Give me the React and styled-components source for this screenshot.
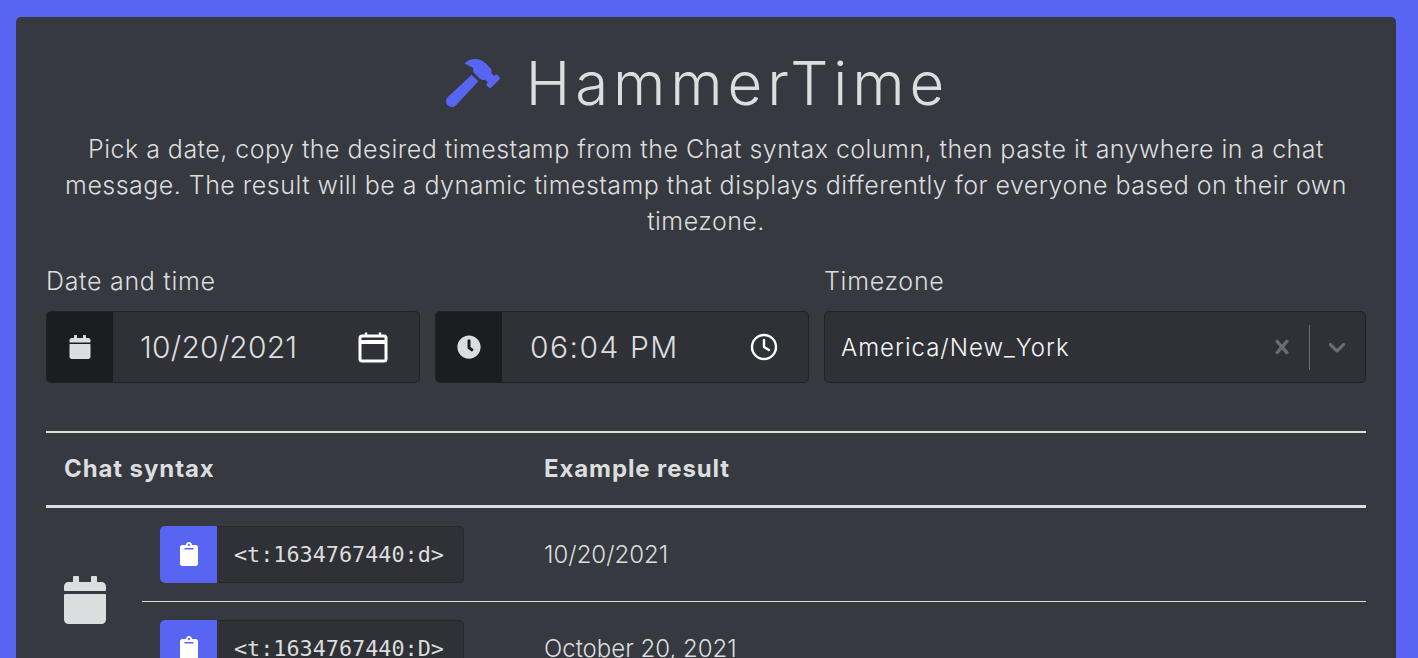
import styled, { createGlobalStyle } from "styled-components";
import { FaCalendar, FaClipboard, FaClock, FaHammer } from "react-icons/fa";

const GlobalStyle = createGlobalStyle`
  html, body {
    margin: 0;
    height: 100%;
    overflow: hidden;
    background: #5865f2;
  }
  body {
    font-family: "Inter", "Open Sans", sans-serif;
    color: #dcddde;
  }
`;

const Page = styled.div`
  padding: 17px 22px 0 16px;
`;

const Card = styled.main`
  background: #36393f;
  border-radius: 5px;
  padding: 30px;
  box-sizing: border-box;
`;

const Heading = styled.h1`
  margin: 0 0 12px;
  padding-right: 17px;
  display: flex;
  justify-content: center;
  align-items: center;
  gap: 26px;
  font-size: 60px;
  line-height: 72px;
  font-weight: 300;
  letter-spacing: 4.9px;

  svg {
    color: #5865f2;
    font-size: 54px;
  }
`;

const Lead = styled.p`
  margin: 0 0 24px;
  font-size: 25px;
  line-height: 36px;
  font-weight: 300;
  text-align: center;
  letter-spacing: 0.47px;
`;

const Fields = styled.div`
  display: grid;
  grid-template-columns: 763px 542px;
  gap: 15px;
`;

const FieldGroup = styled.div`
  display: flex;
  flex-direction: column;
`;

const Label = styled.label`
  font-size: 25px;
  line-height: 36px;
  font-weight: 300;
  margin-bottom: 12px;
  letter-spacing: 0.7px;
`;

const InputRow = styled.div`
  display: grid;
  grid-template-columns: 1fr 1fr;
  gap: 15px;
`;

const InputGroup = styled.div`
  display: flex;
  height: 72px;
  box-sizing: border-box;
  background: #2f3136;
  border: 1px solid #202225;
  border-radius: 5px;
  overflow: hidden;
`;

const Addon = styled.div`
  width: 67px;
  margin-left: -1px;
  flex: none;
  background: #1c1d20;
  display: flex;
  align-items: center;
  justify-content: center;
  font-size: 24px;
`;

const InputValue = styled.div`
  flex: 1;
  display: flex;
  align-items: center;
  justify-content: space-between;
  padding: ${({ $time }) => ($time ? "0 30px 0 28px" : "0 30px 0 27px")};
  font-size: 30px;
  font-weight: 300;
  letter-spacing: ${({ $time }) => ($time ? "1.5px" : "0.2px")};
  color: #dcddde;

  svg {
    flex: none;
    color: #fff;
  }
`;

const SelectBox = styled(InputGroup)`
  align-items: center;
  padding: 0 14px 0 16px;
`;

const SelectValue = styled.div`
  flex: 1;
  font-size: 24px;
  font-weight: 300;
  color: #f6f6f7;
  letter-spacing: 1px;
`;

const Indicator = styled.svg`
  width: 28px;
  height: 28px;
  fill: #6b6d70;
  flex: none;
`;

const IndicatorSep = styled.span`
  width: 1px;
  height: 45px;
  background: #6b6d70;
  margin: 0 13px;
`;

const Table = styled.table`
  width: 100%;
  margin-top: 48px;
  border-collapse: collapse;
  table-layout: fixed;
  font-size: 24px;

  th {
    text-align: left;
    font-weight: 700;
    padding: 18px;
    line-height: 36px;
    letter-spacing: 0.9px;
    border-top: 2px solid #dcddde;
    border-bottom: 3px solid #dcddde;
  }
`;

const GroupIcon = styled.td`
  padding: 18px 18px 22px;
  vertical-align: middle;
  font-size: 48px;
  line-height: 0;

  svg {
    display: block;
    width: 42px;
  }
`;

const CodeCell = styled.td`
  padding: 18px;
  border-bottom: 1px solid #dcddde;
`;

const ResultCell = styled.td`
  padding: 18px;
  font-weight: 300;
  font-size: 24px;
  line-height: 36px;
  vertical-align: middle;
  border-bottom: 1px solid #dcddde;
`;

const CopyButton = styled.div`
  display: flex;
  width: fit-content;
  height: 57px;
  border-radius: 5px;
  overflow: hidden;
  background: #2f3136;
  box-shadow: inset 0 0 0 1px #27292d;
`;

const CopyIcon = styled.div`
  width: 57px;
  padding-bottom: 2px;
  box-sizing: border-box;
  background: #5865f2;
  color: #fff;
  display: flex;
  align-items: center;
  justify-content: center;
  font-size: 24px;
`;

const Code = styled.code`
  display: flex;
  align-items: center;
  padding: 0 20px 0 17px;
  font-family: "DejaVu Sans Mono", monospace;
  font-size: 21.8px;
  color: #dcddde;
`;

const CalendarOutline = () => (
  <svg width="32" height="32" viewBox="0 0 32 32" fill="none" stroke="currentColor" strokeWidth="3" strokeLinejoin="round">
    <rect x="3" y="5" width="26" height="25" rx="2" />
    <path d="M3 11h26" strokeWidth="4" />
    <path d="M9 1.5v4M23 1.5v4" strokeWidth="2.5" />
  </svg>
);

const ClockOutline = () => (
  <svg width="28" height="28" viewBox="0 0 28 28" fill="none" stroke="currentColor" strokeWidth="2.4" strokeLinecap="round" strokeLinejoin="round">
    <circle cx="14" cy="14" r="12" />
    <path d="M14 7v7l5 3" />
  </svg>
);

const rows = [
  { code: "<t:1634767440:d>", result: "10/20/2021" },
  { code: "<t:1634767440:D>", result: "October 20, 2021" },
];

export default function App() {
  return (
    <Page>
      <GlobalStyle />
      <Card>
        <Heading>
          <FaHammer />
          HammerTime
        </Heading>
        <Lead>
          Pick a date, copy the desired timestamp from the Chat syntax column, then paste it anywhere in a chat
          message. The result will be a dynamic timestamp that displays differently for everyone based on their own
          timezone.
        </Lead>
        <Fields>
          <FieldGroup>
            <Label>Date and time</Label>
            <InputRow>
              <InputGroup>
                <Addon>
                  <FaCalendar />
                </Addon>
                <InputValue>
                  10/20/2021
                  <CalendarOutline />
                </InputValue>
              </InputGroup>
              <InputGroup>
                <Addon>
                  <FaClock />
                </Addon>
                <InputValue $time>
                  06:04 PM
                  <ClockOutline />
                </InputValue>
              </InputGroup>
            </InputRow>
          </FieldGroup>
          <FieldGroup>
            <Label>Timezone</Label>
            <SelectBox>
              <SelectValue>America/New_York</SelectValue>
              <Indicator viewBox="0 0 20 20">
                <path d="M14.348 14.849c-0.469 0.469-1.229 0.469-1.697 0l-2.651-3.030-2.651 3.029c-0.469 0.469-1.229 0.469-1.697 0-0.469-0.469-0.469-1.229 0-1.697l2.758-3.15-2.759-3.152c-0.469-0.469-0.469-1.228 0-1.697s1.228-0.469 1.697 0l2.652 3.031 2.651-3.031c0.469-0.469 1.228-0.469 1.697 0s0.469 1.229 0 1.697l-2.758 3.152 2.758 3.15c0.469 0.469 0.469 1.229 0 1.698z" />
              </Indicator>
              <IndicatorSep />
              <Indicator viewBox="0 0 20 20">
                <path d="M4.516 7.548c0.436-0.446 1.043-0.481 1.576 0l3.908 3.747 3.908-3.747c0.533-0.481 1.141-0.446 1.576 0 0.436 0.445 0.408 1.197 0 1.615-0.406 0.418-4.695 4.502-4.695 4.502-0.217 0.223-0.502 0.335-0.789 0.335s-0.572-0.112-0.79-0.335c0 0-4.287-4.084-4.695-4.502s-0.436-1.17 0-1.615z" />
              </Indicator>
            </SelectBox>
          </FieldGroup>
        </Fields>
        <Table>
          <colgroup>
            <col width="96" />
            <col width="384" />
            <col />
          </colgroup>
          <thead>
            <tr>
              <th colSpan={2}>Chat syntax</th>
              <th>Example result</th>
            </tr>
          </thead>
          <tbody>
            {rows.map((row, i) => (
              <tr key={row.code}>
                {i === 0 && (
                  <GroupIcon rowSpan={rows.length}>
                    <FaCalendar />
                  </GroupIcon>
                )}
                <CodeCell>
                  <CopyButton>
                    <CopyIcon>
                      <FaClipboard />
                    </CopyIcon>
                    <Code>{row.code}</Code>
                  </CopyButton>
                </CodeCell>
                <ResultCell>{row.result}</ResultCell>
              </tr>
            ))}
          </tbody>
        </Table>
      </Card>
    </Page>
  );
}
